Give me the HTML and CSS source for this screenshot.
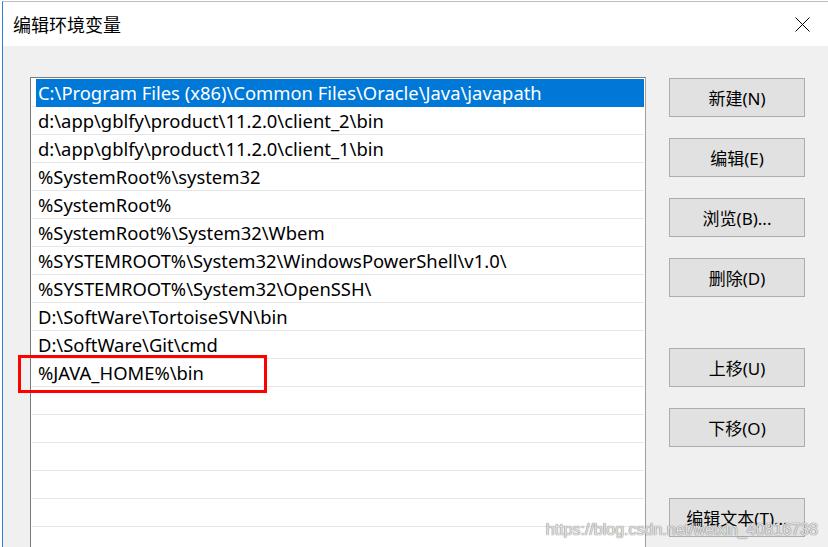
FILE: index.html
```html
<!DOCTYPE html>
<html lang="zh-CN">
<head>
  <meta charset="UTF-8" />
  <title>编辑环境变量</title>
  <link rel="stylesheet" href="styles.css">
</head>
<body>
<div class="window">
  <div class="titlebar">
    <span class="title">编辑环境变量</span>
    <span class="close">
      <svg width="15" height="15" viewBox="0 0 15 15"><path d="M0.5 0.5 L14.5 14.5 M14.5 0.5 L0.5 14.5" stroke="#000" stroke-width="1" fill="none"/></svg>
    </span>
  </div>
  <div class="body">
    <div class="pathlist">
      <div class="row selected"><span class="label">C:\Program Files (x86)\Common Files\Oracle\Java\javapath</span></div>
      <div class="row"><span class="label">d:\app\gblfy\product\11.2.0\client_2\bin</span></div>
      <div class="row"><span class="label">d:\app\gblfy\product\11.2.0\client_1\bin</span></div>
      <div class="row"><span class="label">%SystemRoot%\system32</span></div>
      <div class="row"><span class="label">%SystemRoot%</span></div>
      <div class="row"><span class="label">%SystemRoot%\System32\Wbem</span></div>
      <div class="row"><span class="label">%SYSTEMROOT%\System32\WindowsPowerShell\v1.0\</span></div>
      <div class="row"><span class="label">%SYSTEMROOT%\System32\OpenSSH\</span></div>
      <div class="row"><span class="label">D:\SoftWare\TortoiseSVN\bin</span></div>
      <div class="row"><span class="label">D:\SoftWare\Git\cmd</span></div>
      <div class="row"><span class="label">%JAVA_HOME%\bin</span></div>
      <div class="row"><span class="label"></span></div>
      <div class="row"><span class="label"></span></div>
      <div class="row"><span class="label"></span></div>
      <div class="row"><span class="label"></span></div>
      <div class="row"><span class="label"></span></div>
      <div class="row"><span class="label"></span></div>
    </div>

    <div class="actions">
      <div class="group">
        <button class="btn">新建(N)</button>
        <button class="btn">编辑(E)</button>
        <button class="btn">浏览(B)...</button>
        <button class="btn">删除(D)</button>
      </div>
      <div class="group">
        <button class="btn">上移(U)</button>
        <button class="btn">下移(O)</button>
      </div>
      <div class="group">
        <button class="btn">编辑文本(T)...</button>
      </div>
    </div>

    <div class="mark"></div>
  </div>
  <div class="watermark">https://blog.csdn.net/weixin_40816738</div>
</div>
</body>
</html>
```

FILE: styles.css
```css
* { box-sizing: border-box; }
html, body { height: 100%; overflow: hidden; }
body {
  margin: 0;
  background: #fff;
  font-family: "Noto Sans", "Noto Sans CJK SC", sans-serif;
  color: #000;
}

.window {
  position: relative;
  height: 546px;
  margin: 1px 0 0 2px;
  border-top: 1px solid #bdbdbd;
  border-left: 1px solid #2b7fd4;
  display: flex;
  flex-direction: column;
}

.titlebar {
  height: 44px;
  flex-shrink: 0;
  background: #fff;
  display: flex;
  align-items: center;
  padding: 0 18px 0 10px;
}
.title {
  font-family: "Noto Sans CJK SC", sans-serif;
  font-size: 18px;
}
.close { margin-left: auto; display: flex; }

.body {
  position: relative;
  flex: 1;
  background: #f0f0f0;
  display: flex;
  align-items: flex-start;
  padding: 31px 0 0 27px;
  overflow: hidden;
}

/* list of path entries */
.pathlist {
  width: 616px;
  height: 520px;
  flex-shrink: 0;
  padding: 1px;
  background: #fff;
  border: 1px solid #a0a0a0;
  border-left-color: #7a7a7a;
  border-top-color: #7a7a7a;
}
.row {
  height: 28px;
  padding-left: 4px;
  border-bottom: 1px solid #e6e6e6;
}
.label {
  display: block;
  height: 27px;
  padding-left: 2px;
  font-size: 18.4px;
  line-height: 28px;
  white-space: nowrap;
}
.row.selected .label {
  height: 28px;
  background: #0078d7;
  color: #fff;
}

/* button column */
.actions {
  margin-left: 23px;
  padding-top: 1px;
  display: flex;
  flex-direction: column;
  gap: 51px;
}
.group {
  display: flex;
  flex-direction: column;
  gap: 21px;
}
.btn {
  width: 136px;
  height: 39px;
  padding: 0;
  border: 1px solid #adadad;
  background: #e1e1e1;
  font-family: "Noto Sans", "Noto Sans CJK SC", sans-serif;
  font-size: 17px;
  color: #000;
}

/* red box drawn over the last entry */
.mark {
  position: absolute;
  left: 15px;
  top: 309px;
  width: 249px;
  height: 38px;
  border: 3px solid #f00;
}

.watermark {
  position: absolute;
  right: 10px;
  bottom: 8px;
  font-family: "Liberation Sans", sans-serif;
  font-size: 16px;
  color: rgba(255, 255, 255, 0.8);
  text-shadow: 0 0 1px #777, 0 0 1px #777;
}
```
